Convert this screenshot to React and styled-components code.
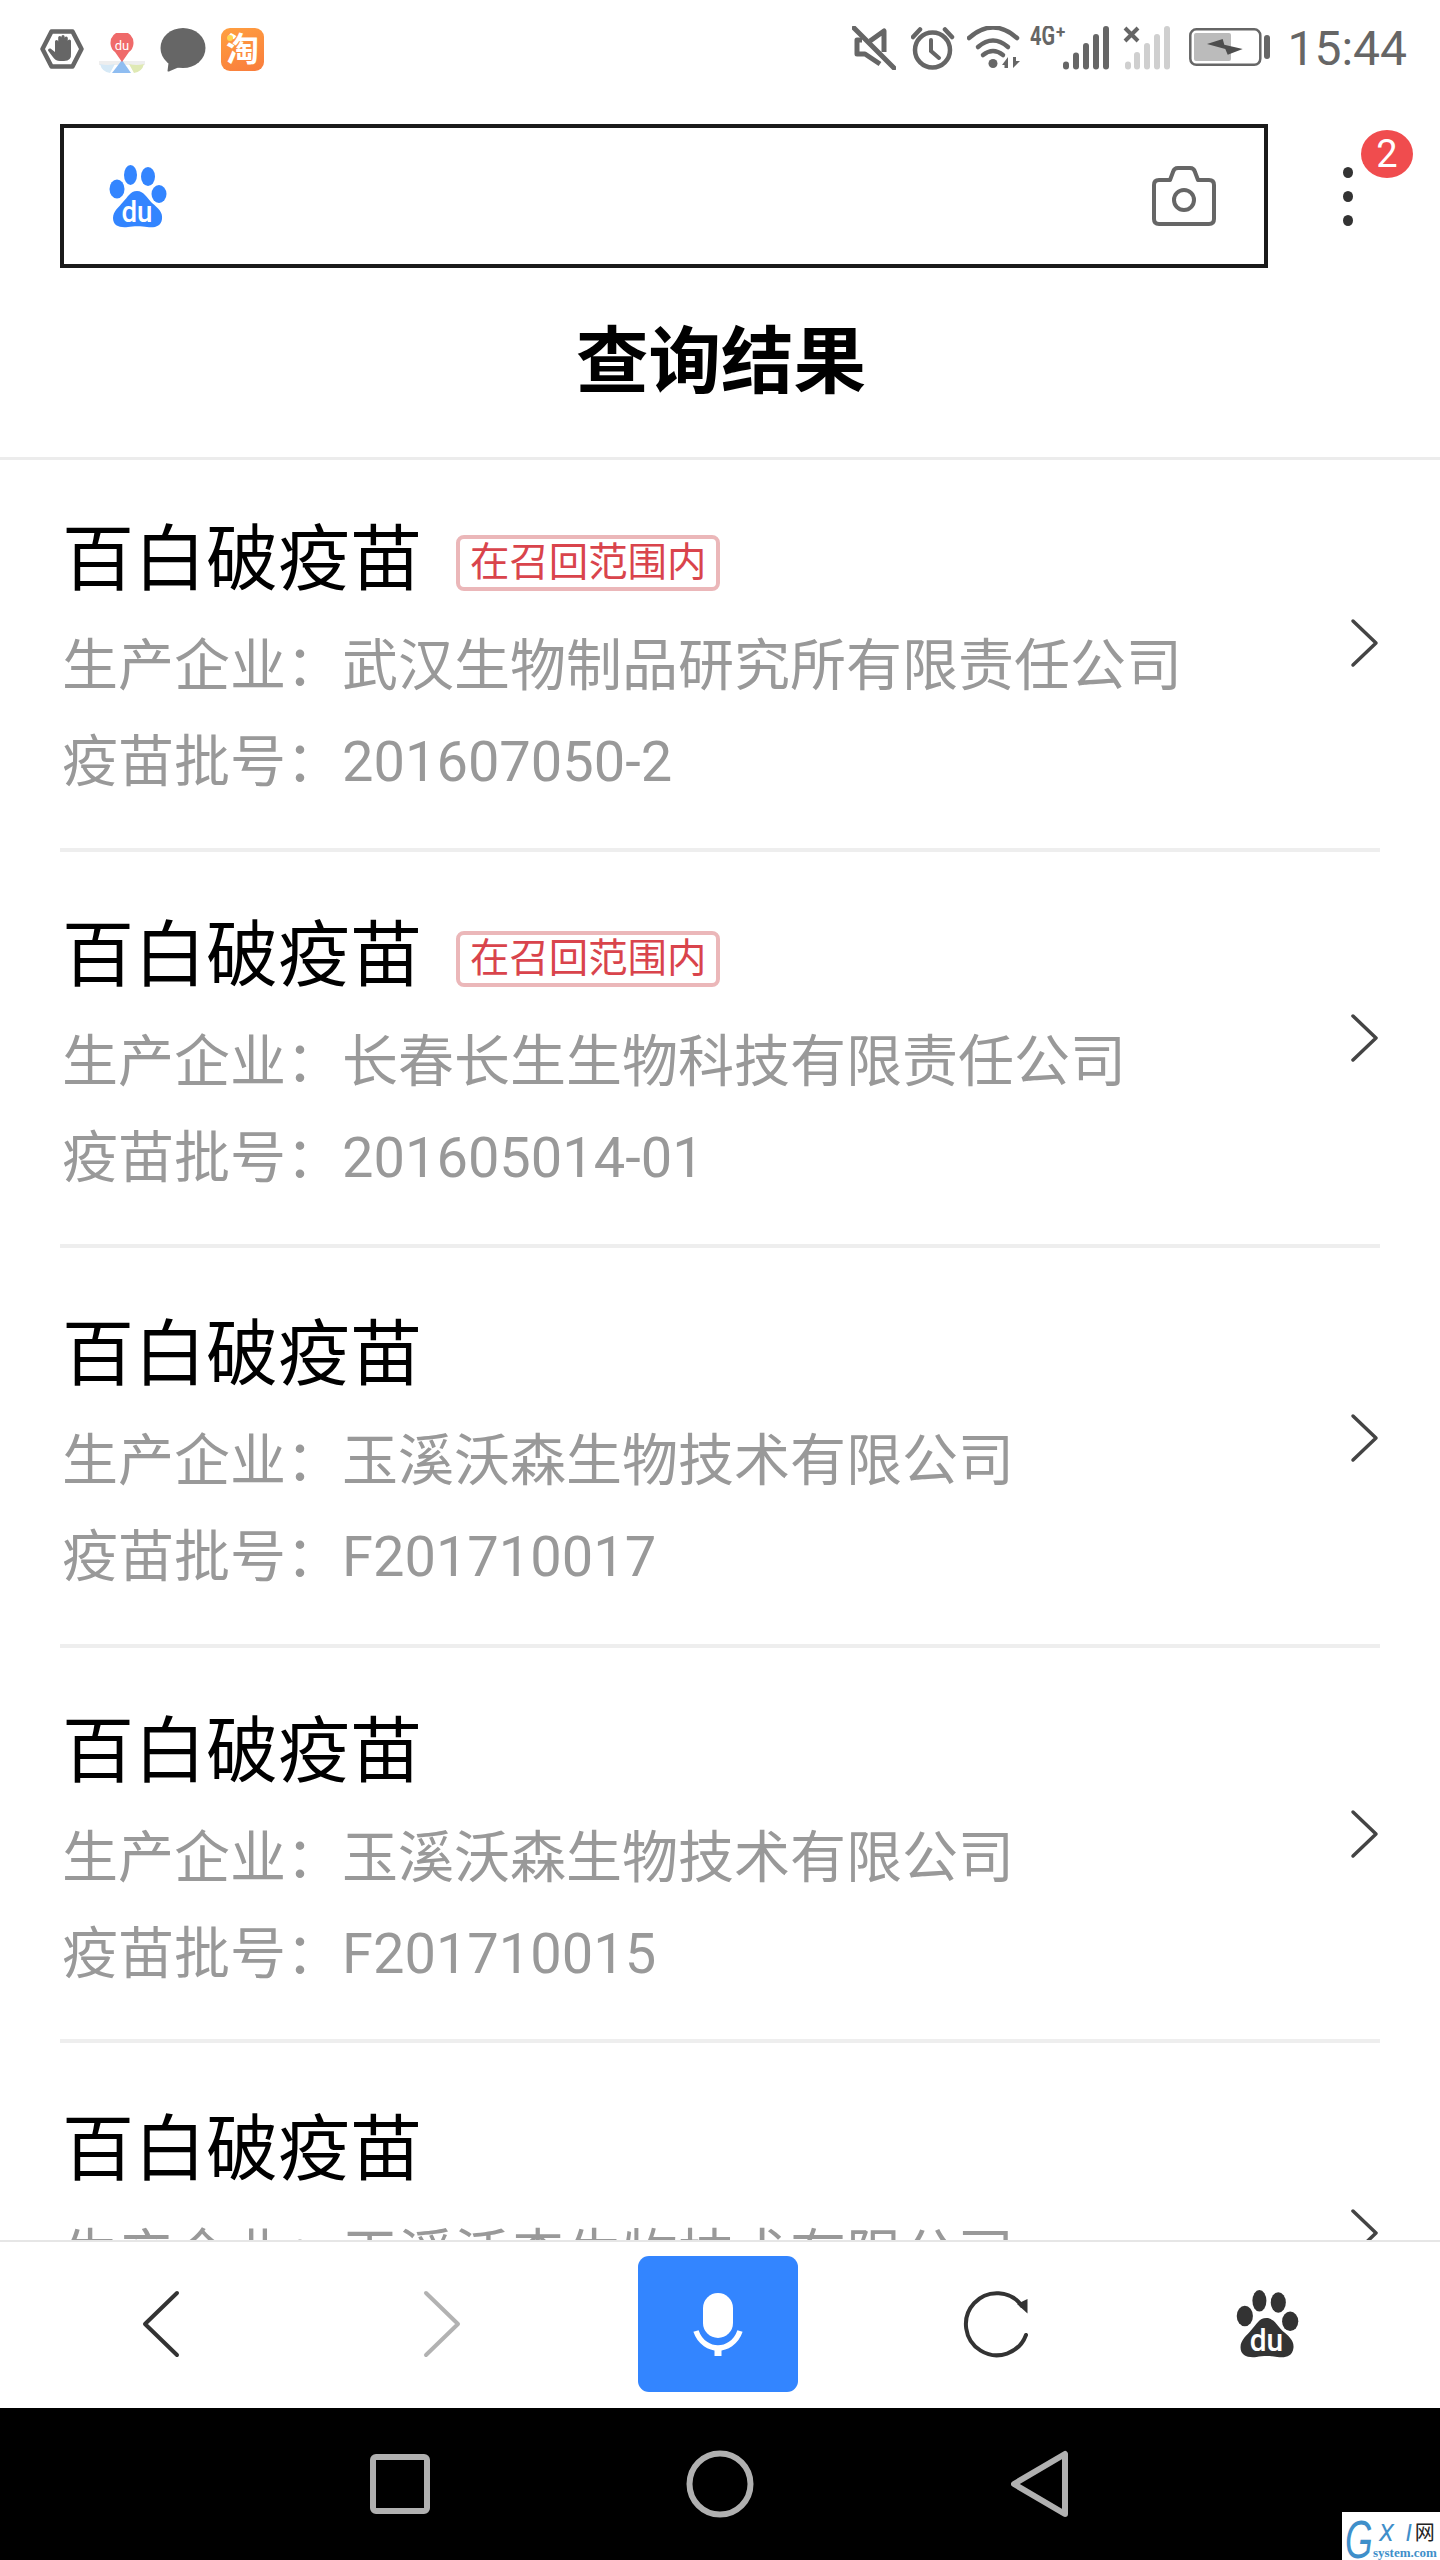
import React from "react";
import styled, { createGlobalStyle } from "styled-components";

const GlobalStyle = createGlobalStyle`
  html, body {
    margin: 0;
    padding: 0;
    background: #fff;
  }
  * {
    box-sizing: border-box;
  }
`;

const FONT = `Roboto, "Noto Sans CJK SC", sans-serif`;

const Page = styled.div`
  position: relative;
  width: 1440px;
  height: 2560px;
  display: flex;
  flex-direction: column;
  overflow: hidden;
  background: #fff;
  font-family: ${FONT};
`;

const StatusBar = styled.div`
  height: 124px;
  flex: none;
  display: flex;
  justify-content: space-between;
  padding: 26px 33px 0 40px;
`;

const StatusGroup = styled.div`
  display: flex;
  align-items: flex-start;
`;

const StatusSlot = styled.div`
  display: flex;
  margin-left: ${(p) => p.$left || 0}px;
  margin-top: ${(p) => p.$top || 0}px;
`;

const TaoIcon = styled.div`
  position: relative;
  width: 43px;
  height: 43px;
  margin-left: 15px;
  margin-top: 2px;
  border-radius: 9px;
  background: linear-gradient(160deg, #ff9f40, #f97c3c);
  color: #fff;
  font-size: 33px;
  font-weight: 700;
  line-height: 43px;
  text-align: center;
  &::before {
    content: "";
    position: absolute;
    left: 6px;
    top: 7px;
    width: 6px;
    height: 6px;
    border-radius: 50%;
    background: #ffd650;
  }
`;

const Clock = styled.span`
  margin-left: 16px;
  margin-top: 1px;
  font-size: 48px;
  line-height: 44px;
  color: #666;
`;

const SearchRow = styled.div`
  height: 145px;
  flex: none;
  display: flex;
  padding-left: 60px;
`;

const SearchBox = styled.div`
  width: 1208px;
  height: 144px;
  border: 4px solid #1a1a1a;
  display: flex;
  align-items: center;
  justify-content: space-between;
  padding: 0 48px 0 45px;
`;

const Menu = styled.div`
  position: relative;
  width: 160px;
  display: flex;
  flex-direction: column;
  align-items: center;
  gap: 13px;
  padding-top: 43px;
`;

const MenuDot = styled.span`
  width: 10px;
  height: 11px;
  border-radius: 50%;
  background: #333;
`;

const CountBadge = styled.span`
  position: absolute;
  left: 93px;
  top: 6px;
  width: 52px;
  height: 48px;
  border-radius: 50%;
  background: #f04c4e;
  color: #fff;
  font-size: 38px;
  line-height: 48px;
  text-align: center;
`;

const PageTitle = styled.h1`
  height: 191px;
  flex: none;
  margin: 0;
  padding-bottom: 16px;
  padding-left: 2px;
  border-bottom: 3px solid #ececec;
  display: flex;
  align-items: center;
  justify-content: center;
  font-size: 72.5px;
  font-weight: 700;
  color: #000;
`;

const List = styled.div`
  flex: 1;
  min-height: 0;
  overflow: hidden;
`;

const Row = styled.div`
  height: ${(p) => p.$height}px;
  margin: 0 60px;
  padding-top: ${(p) => p.$top}px;
  border-bottom: 4px solid #eeeeee;
  display: flex;
  justify-content: space-between;
  align-items: flex-start;
  &:last-child {
    border-bottom: 0;
  }
`;

const RowText = styled.div`
  display: flex;
  flex-direction: column;
  padding-left: 2px;
`;

const NameLine = styled.div`
  display: flex;
  align-items: center;
  height: 100px;
`;

const Name = styled.span`
  font-size: 72px;
  line-height: 100px;
  color: #000;
`;

const RecallTag = styled.span`
  margin-left: 34px;
  margin-top: 6px;
  height: 56px;
  padding: 0 10px;
  border: 4px solid #ebb7b9;
  border-radius: 8px;
  color: #d9444c;
  font-size: 39.4px;
  line-height: 47px;
  white-space: nowrap;
`;

const Meta = styled.div`
  margin-top: ${(p) => p.$top || 0}px;
  font-size: 56px;
  line-height: 96px;
  color: #999;
  white-space: nowrap;
`;

const RowArrow = styled.svg`
  margin-top: ${(p) => p.$top}px;
  width: 30px;
  height: 50px;
  flex: none;
`;

const Toolbar = styled.div`
  height: 168px;
  flex: none;
  border-top: 2px solid #e6e6e6;
  background: #fff;
  padding-left: 20px;
  display: grid;
  grid-template-columns: 282px 280px 272px 284px 258px;
  align-items: center;
  justify-items: center;
  padding-bottom: 2px;
`;

const MicButton = styled.div`
  width: 160px;
  height: 136px;
  border-radius: 11px;
  background: #3385ff;
  display: flex;
  align-items: center;
  justify-content: center;
`;

const NavBar = styled.div`
  height: 152px;
  flex: none;
  background: #000;
  padding-left: 240px;
  display: grid;
  grid-template-columns: repeat(3, 320px);
  align-items: center;
  justify-items: center;
`;

const Watermark = styled.div`
  position: absolute;
  right: 0;
  bottom: 0;
  width: 98px;
  height: 48px;
  background: #fff;
  display: flex;
  overflow: hidden;
  padding-left: 3px;
`;

const MarkG = styled.span`
  width: 28px;
  flex: none;
  font-family: "Liberation Sans", sans-serif;
  font-style: italic;
  font-size: 54px;
  line-height: 54px;
  color: #3f8fca;
  transform: scaleX(0.66);
  transform-origin: left center;
`;

const MarkRight = styled.div`
  display: flex;
  flex-direction: column;
  align-items: flex-start;
  padding-top: 8px;
`;

const MarkTop = styled.div`
  display: flex;
  align-items: center;
  height: 26px;
  padding-left: 6px;
  font-size: 24px;
  line-height: 26px;
  font-style: italic;
  color: #3f8fca;
  white-space: pre;
`;

const MarkNet = styled.span`
  margin-left: 3px;
  font-size: 20px;
  font-style: normal;
  color: #222;
`;

const MarkDomain = styled.span`
  font-family: "Liberation Serif", serif;
  font-weight: 700;
  font-size: 13px;
  line-height: 14px;
  color: #3f8fca;
`;

const Paw = ({ color, width, height }) => (
  <svg width={width} height={height} viewBox="0 0 58 63">
    <g fill={color}>
      <ellipse cx="21.5" cy="10" rx="6.5" ry="10" />
      <ellipse cx="39" cy="11.5" rx="7" ry="9.5" />
      <ellipse cx="8" cy="24" rx="7.5" ry="9.5" />
      <ellipse cx="50" cy="29" rx="7.5" ry="9" />
      <path d="M28 26C35 26 38 33 43 38C49 43 54 47 53 54C52 62 45 63 38 62C33 61 24 61 19 62C11 63 4 61 4 53C4 46 10 42 14 37C19 32 21 26 28 26Z" />
    </g>
    <text
      x="28"
      y="56.5"
      fill="#fff"
      fontFamily="Roboto, sans-serif"
      fontWeight="500"
      fontSize="29"
      textAnchor="middle"
      textLength="31"
      lengthAdjust="spacingAndGlyphs"
    >
      du
    </text>
  </svg>
);

const HandIcon = () => (
  <svg width="44" height="40" viewBox="0 0 44 40">
    <path d="M11.5 2.5H32.5L41.5 20L32.5 37.5H11.5L2.5 20Z" fill="none" stroke="#666" strokeWidth="4.5" strokeLinejoin="round" />
    <path
      d="M15 12.5a1.6 1.6 0 0 1 3.2 0V8.5a1.6 1.6 0 0 1 3.2 0V7.5a1.6 1.6 0 0 1 3.2 0V9a1.6 1.6 0 0 1 3.2 0V12a1.6 1.6 0 0 1 3.2 0V24Q31.800 32 24 32H20Q15.500 32 12.500 27.500L8 21.500Q8 19 10.500 19.500L15 23Z"
      fill="#666"
    />
  </svg>
);

const MapPinIcon = () => (
  <svg width="48" height="41" viewBox="0 0 48 41">
    <rect x="1" y="28" width="46" height="4" fill="#eeeeee" />
    <path d="M2 31Q9 33 17 31L12 40Q4 39 2 31Z" fill="#d6e9f6" />
    <path d="M31 31Q39 33 46 31Q44 39 36 40Z" fill="#dfe9b4" />
    <path d="M24 27L33 40H14Z" fill="#8fbdf1" />
    <path d="M24 29L17 19A11.500 11.500 0 1 1 31 19Z" fill="#ef6a6a" />
    <text x="24" y="17" fill="#fff" fontFamily="Roboto, sans-serif" fontSize="13" textAnchor="middle">
      du
    </text>
  </svg>
);

const BubbleIcon = () => (
  <svg width="46" height="44" viewBox="0 0 46 44">
    <ellipse cx="23" cy="20" rx="22.500" ry="20" fill="#666" />
    <path d="M9 31L7.500 43Q8 44 10 43L24 37Z" fill="#666" />
  </svg>
);

const MuteIcon = () => (
  <svg width="44" height="44" viewBox="0 0 44 44" fill="none" stroke="#666" strokeWidth="5">
    <path d="M2 2L42 42" strokeLinecap="round" />
    <path d="M10 14H5V28H13L28 38" strokeLinejoin="round" />
    <path d="M18 15L32 5V26" strokeLinejoin="round" />
  </svg>
);

const AlarmIcon = () => (
  <svg width="44" height="44" viewBox="0 0 44 44" fill="none" stroke="#666" strokeWidth="4.500" strokeLinecap="round">
    <circle cx="21.500" cy="24" r="17.500" />
    <path d="M2 11L9 3.500M34 3.500L41 11" />
    <path d="M20 14V25L28 32" strokeWidth="4" />
  </svg>
);

const WifiIcon = () => (
  <svg width="53" height="43" viewBox="0 0 53 43">
    <g fill="none" stroke="#666" strokeWidth="4.500" strokeLinecap="round">
      <path d="M2 12Q26 -9 50 12" />
      <path d="M11 21Q26 8 41 21" />
      <path d="M16 29Q26 21 36 29" />
    </g>
    <circle cx="26" cy="37.500" r="4.500" fill="#666" />
    <path d="M35 39L41 31V42H37.500V39ZM46 31H49V35L53 35L46 42Z" fill="#666" />
  </svg>
);

const Cell4G = () => (
  <svg width="82" height="44" viewBox="0 0 82 44">
    <text
      x="0"
      y="19"
      fill="#666"
      fontFamily="Roboto, sans-serif"
      fontWeight="700"
      fontSize="27"
      textLength="25"
      lengthAdjust="spacingAndGlyphs"
    >
      4G
    </text>
    <text x="26" y="12" fill="#666" fontFamily="Roboto, sans-serif" fontWeight="700" fontSize="17">
      +
    </text>
    <g fill="#666">
      <rect x="33" y="35.500" width="6" height="8" rx="3" />
      <rect x="43" y="26.500" width="6" height="17" rx="3" />
      <rect x="53" y="17" width="6" height="26.500" rx="3" />
      <rect x="63" y="8" width="6" height="35.500" rx="3" />
      <rect x="73" y="0" width="6" height="43.500" rx="3" />
    </g>
  </svg>
);

const CellEmpty = () => (
  <svg width="48" height="44" viewBox="0 0 48 44">
    <g fill="#cfcfcf">
      <rect x="2" y="35.500" width="6" height="8" rx="3" />
      <rect x="11" y="26" width="6" height="17.500" rx="3" />
      <rect x="21" y="17" width="6" height="26.500" rx="3" />
      <rect x="31" y="8" width="6" height="35.500" rx="3" />
      <rect x="41" y="0" width="6" height="43.500" rx="3" />
    </g>
    <path d="M2 2L15 15M15 2L2 15" stroke="#666" strokeWidth="4" />
  </svg>
);

const BatteryIcon = () => (
  <svg width="82" height="40" viewBox="0 0 82 40">
    <rect x="1.300" y="1.300" width="70" height="35.500" rx="6" fill="#fff" stroke="#666" strokeWidth="2.500" />
    <rect x="5" y="5" width="37" height="28" rx="2" fill="#bbb" />
    <path d="M18 16L33.700 11L35.300 16.700L53.700 21L38.700 26.700L36.300 21Z" fill="#4d4d4d" />
    <rect x="75" y="7" width="6" height="24" rx="3" fill="#666" />
  </svg>
);

const CameraIcon = () => (
  <svg width="64" height="60" viewBox="0 0 64 60" fill="none" stroke="#666" strokeWidth="4">
    <path
      d="M18 14L21 6Q22 2 26 2H38Q42 2 43 6L46 14H57Q62 14 62 19V53Q62 58 57 58H7Q2 58 2 53V19Q2 14 7 14Z"
      strokeLinejoin="round"
    />
    <circle cx="32" cy="34" r="10" />
  </svg>
);

const MicIcon = () => (
  <svg width="52" height="66" viewBox="0 0 52 66" fill="#fff">
    <rect x="11" y="2" width="30" height="45" rx="15" />
    <path d="M4 40C8 52 18 57 26 57C34 57 44 52 48 40" fill="none" stroke="#fff" strokeWidth="5.500" />
    <rect x="22.500" y="56" width="7" height="9" />
  </svg>
);

const BackIcon = ({ color }) => (
  <svg width="38" height="68" viewBox="0 0 38 68">
    <path d="M35 3L3 34L35 65" fill="none" stroke={color} strokeWidth="4" strokeLinecap="round" strokeLinejoin="round" />
  </svg>
);

const ForwardIcon = ({ color }) => (
  <svg width="38" height="68" viewBox="0 0 38 68">
    <path d="M3 3L35 34L3 65" fill="none" stroke={color} strokeWidth="4" strokeLinecap="round" strokeLinejoin="round" />
  </svg>
);

const RefreshIcon = () => (
  <svg width="68" height="68" viewBox="0 0 68 68">
    <path d="M64 45A31 31 0 1 1 60 16" fill="none" stroke="#333" strokeWidth="4" strokeLinecap="round" />
    <path d="M65.500 9V23.500L55 14Z" fill="#333" />
  </svg>
);

const NavSquare = () => (
  <svg width="60" height="60" viewBox="0 0 60 60">
    <rect x="3" y="3" width="54" height="54" rx="3" fill="none" stroke="#b0b0b0" strokeWidth="6" />
  </svg>
);

const NavCircle = () => (
  <svg width="68" height="68" viewBox="0 0 68 68">
    <circle cx="34" cy="34" r="30.500" fill="none" stroke="#b0b0b0" strokeWidth="6" />
  </svg>
);

const NavTriangle = () => (
  <svg width="58" height="68" viewBox="0 0 58 68">
    <path d="M54 4V64L3 34Z" fill="none" stroke="#b0b0b0" strokeWidth="6" strokeLinejoin="round" />
  </svg>
);

const records = [
  { company: "武汉生物制品研究所有限责任公司", batch: "201607050-2", recalled: true, height: 392, top: 50, arrow: 108 },
  { company: "长春长生生物科技有限责任公司", batch: "201605014-01", recalled: true, height: 396, top: 54, arrow: 107 },
  { company: "玉溪沃森生物技术有限公司", batch: "F201710017", height: 400, top: 57, arrow: 108 },
  { company: "玉溪沃森生物技术有限公司", batch: "F201710015", height: 395, top: 54, arrow: 107 },
  { company: "玉溪沃森生物技术有限公司", batch: "F201710015", height: 400, top: 57, arrow: 108 },
];

export default function App() {
  return (
    <Page>
      <GlobalStyle />
      <StatusBar>
        <StatusGroup>
          <StatusSlot $top={3}>
            <HandIcon />
          </StatusSlot>
          <StatusSlot $left={14} $top={7}>
            <MapPinIcon />
          </StatusSlot>
          <StatusSlot $left={14} $top={2}>
            <BubbleIcon />
          </StatusSlot>
          <TaoIcon>淘</TaoIcon>
        </StatusGroup>
        <StatusGroup>
          <MuteIcon />
          <StatusSlot $left={15}>
            <AlarmIcon />
          </StatusSlot>
          <StatusSlot $left={12}>
            <WifiIcon />
          </StatusSlot>
          <StatusSlot $left={10}>
            <Cell4G />
          </StatusSlot>
          <StatusSlot $left={11}>
            <CellEmpty />
          </StatusSlot>
          <StatusSlot $left={18} $top={2}>
            <BatteryIcon />
          </StatusSlot>
          <Clock>15:44</Clock>
        </StatusGroup>
      </StatusBar>

      <SearchRow>
        <SearchBox>
          <Paw color="#3385ff" width={58} height={63} />
          <CameraIcon />
        </SearchBox>
        <Menu>
          <MenuDot />
          <MenuDot />
          <MenuDot />
          <CountBadge>2</CountBadge>
        </Menu>
      </SearchRow>

      <PageTitle>查询结果</PageTitle>

      <List>
        {records.map((r, i) => (
          <Row key={i} $height={r.height} $top={r.top}>
            <RowText>
              <NameLine>
                <Name>百白破疫苗</Name>
                {r.recalled && <RecallTag>在召回范围内</RecallTag>}
              </NameLine>
              <Meta $top={8}>生产企业：{r.company}</Meta>
              <Meta>疫苗批号：{r.batch}</Meta>
            </RowText>
            <RowArrow $top={r.arrow} viewBox="0 0 30 50">
              <path d="M3 3L26 25L3 47" fill="none" stroke="#444" strokeWidth="3.500" strokeLinecap="round" strokeLinejoin="round" />
            </RowArrow>
          </Row>
        ))}
      </List>

      <Toolbar>
        <BackIcon color="#333" />
        <ForwardIcon color="#b2b2b2" />
        <MicButton>
          <MicIcon />
        </MicButton>
        <RefreshIcon />
        <Paw color="#333" width={63} height={68} />
      </Toolbar>

      <NavBar>
        <NavSquare />
        <NavCircle />
        <NavTriangle />
      </NavBar>

      <Watermark>
        <MarkG>G</MarkG>
        <MarkRight>
          <MarkTop>
            {"X  I"}
            <MarkNet>网</MarkNet>
          </MarkTop>
          <MarkDomain>system.com</MarkDomain>
        </MarkRight>
      </Watermark>
    </Page>
  );
}
